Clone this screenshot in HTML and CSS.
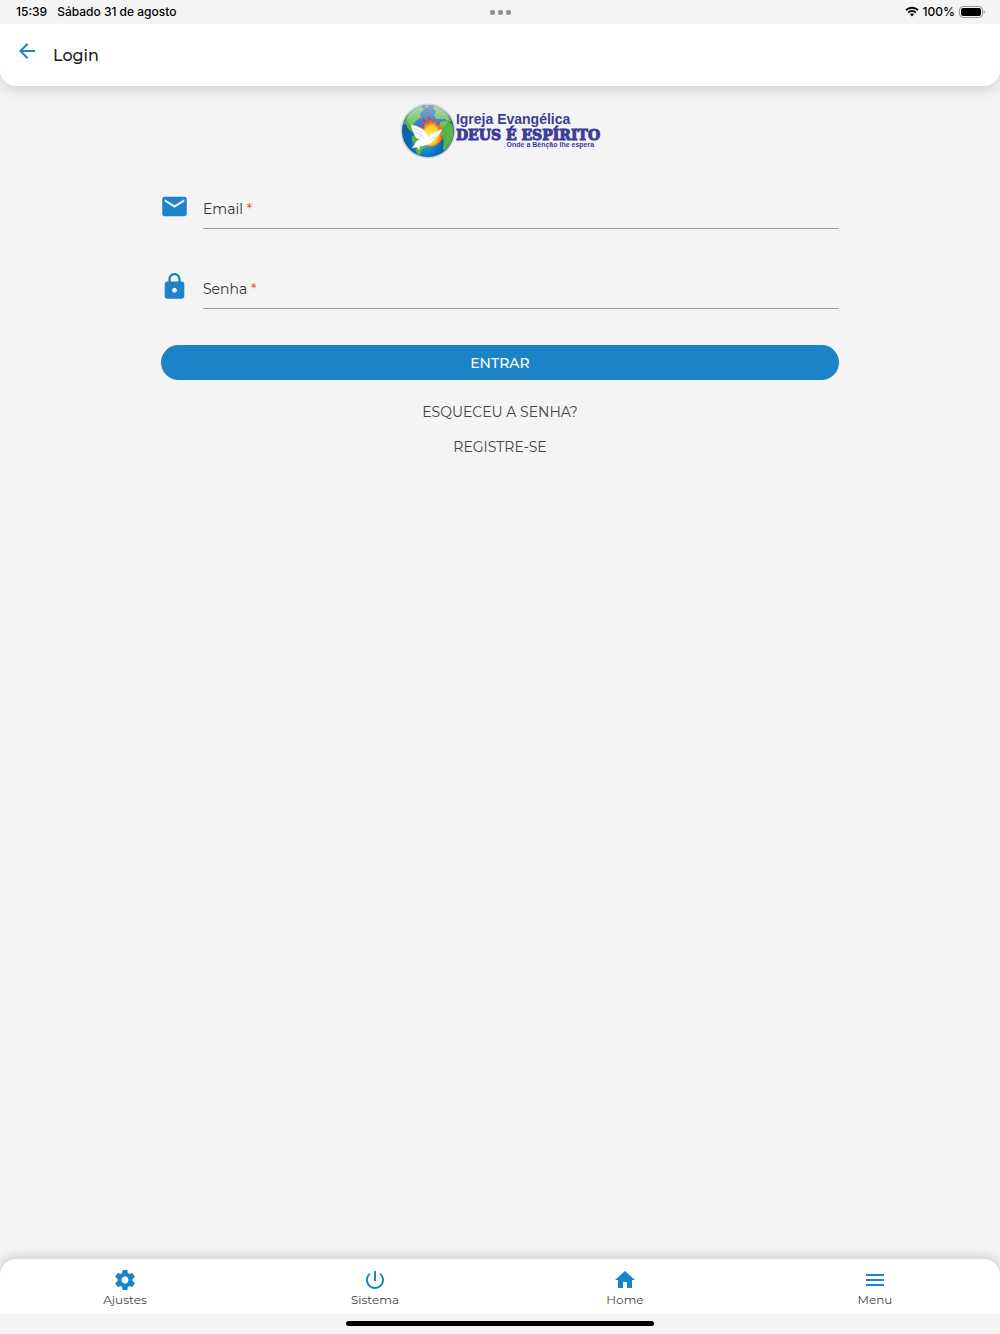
FILE: index.html
```html
<!DOCTYPE html>
<html lang="pt-BR">
<head>
    <meta charset="UTF-8">
    <meta name="viewport" content="width=device-width, initial-scale=1.0">
    <title>Login</title>
    <link rel="stylesheet" href="styles.css">
</head>
<body>
<div class="status-bar">
    <div class="status-left">
        <span>15:39</span>
        <span>Sábado 31 de agosto</span>
    </div>
    <div class="status-dots"><i></i><i></i><i></i></div>
    <div class="status-right">
        <svg class="wifi" viewBox="0 0 14 11">
            <path d="M1 4.2a8.6 8.6 0 0 1 12 0M3.2 6.5a5.5 5.5 0 0 1 7.6 0" fill="none" stroke="#000" stroke-width="1.8"/>
            <path d="M4.9 8.3a3 3 0 0 1 4.2 0L7 10.5z"/>
        </svg>
        <span>100%</span>
        <svg class="battery" viewBox="0 0 26 12">
            <rect x="0.5" y="0.5" width="23" height="11" rx="3.5" fill="none" stroke="#999"/>
            <rect x="2" y="2" width="20" height="8" rx="2"/>
            <path d="M24.7 4.2q1.2.5 1.2 1.8t-1.2 1.8z" fill="#999"/>
        </svg>
    </div>
</div>

<header class="header">
    <button type="button" class="back" aria-label="Voltar">
        <svg viewBox="0 0 24 24"><path d="M20 11H7.83l5.59-5.59L12 4l-8 8 8 8 1.41-1.41L7.83 13H20z"/></svg>
    </button>
    <h1>Login</h1>
</header>

<main class="content">
    <div class="logo">
        <svg class="globe" viewBox="0 0 56 56">
            <defs>
                <radialGradient id="sea" cx="45%" cy="75%" r="75%">
                    <stop offset="0" stop-color="#18a8e8"/>
                    <stop offset="0.4" stop-color="#0c68b8"/>
                    <stop offset="0.85" stop-color="#14539e"/>
                    <stop offset="1" stop-color="#0b3a80"/>
                </radialGradient>
                <linearGradient id="shine" x1="0" y1="0" x2="0" y2="1">
                    <stop offset="0" stop-color="#fff" stop-opacity="0.55"/>
                    <stop offset="1" stop-color="#fff" stop-opacity="0.05"/>
                </linearGradient>
                <radialGradient id="fire" cx="50%" cy="62%" r="55%">
                    <stop offset="0" stop-color="#fff34a"/>
                    <stop offset="0.5" stop-color="#ffd323"/>
                    <stop offset="0.75" stop-color="#fb7022"/>
                    <stop offset="1" stop-color="#e62b20"/>
                </radialGradient>
                <clipPath id="disc"><circle cx="28" cy="28" r="25.5"/></clipPath>
            </defs>
            <circle cx="28" cy="28" r="27.5" fill="#cfd3d7"/>
            <circle cx="28" cy="28" r="26" fill="url(#sea)"/>
            <g clip-path="url(#disc)" fill="#56b544">
                <path d="M4 18 8 11l7-6 7-1 2 3-4 3 1 4-5 4-3 4 0 4 3 4-3 0-5-4-2-5-3 1z"/>
                <path d="m12 33 5-1 6 4 4 4-1 4-4 3-2 5-3-1-2-8-3-5z"/>
                <path d="m33 4 6-2 6 4 5 6 3 6-4 1-4-3-5 0-4 0-2-4 2-3z"/>
                <path d="m40 19 6-1 5 2 5 6-1 11-4 4-3 7-4 2-1-6 1-6-3-6-3-5z"/>
                <path d="m24 2 5 0-2 3z"/>
            </g>
            <ellipse cx="28" cy="15" rx="21" ry="13" fill="url(#shine)"/>
            <path d="M21 38c-3-5 0-10-1-16 2 1 3 3 4 4 1-4-1-7-1-11 3 2 4 5 5 7 1-3 1-6 0-9 3 2 4 5 5 8 1-2 1-4 1-6 2 3 2 6 2 8 2-1 3-2 4-4 0 4 1 5 0 8l3-2c-2 4-1 6-2 9l2-1c-1 5-4 8-7 9-5 3-12 2-15-4z" fill="url(#fire)"/>
            <path d="M11 22c5 0 10 3 14 6 2 2 3 4 3 6 2-3 5-4 8-5l6-3c-1 4-4 7-7 9-2 4-5 7-9 7-2 1-4 1-6 1l-1 4-2-3-5 1 3-4c1-3 3-4 5-5-3 0-5-2-6-5l-1-3c-1-2-2-4-2-6z" fill="#fff" stroke="#cbdce8" stroke-width="0.4"/>
            <path d="m14 25 9 5m-7-1 7 4m-4 0 5 2m5 2 7-4" stroke="#b7ccd9" stroke-width="0.6" fill="none"/>
        </svg>
        <div class="logo-text">
            <span class="logo-top">Igreja Evangélica</span>
            <span class="logo-name">DEUS É ESPÍRITO</span>
            <span class="logo-slogan">Onde a Bênção lhe espera</span>
        </div>
    </div>

    <form class="login-form">
        <div class="field">
            <svg viewBox="1 1 22 22"><path d="M20 4H4c-1.1 0-1.99.9-1.99 2L2 18c0 1.1.9 2 2 2h16c1.1 0 2-.9 2-2V6c0-1.1-.9-2-2-2zm0 4-8 5-8-5V6l8 5 8-5z"/></svg>
            <div class="field-input">
                <label for="email">Email <span>*</span></label>
                <input type="email" id="email" required>
            </div>
        </div>
        <div class="field">
            <svg viewBox="1 1 22 22"><path d="M18 8h-1V6c0-2.76-2.24-5-5-5S7 3.24 7 6v2H6c-1.1 0-2 .9-2 2v10c0 1.1.9 2 2 2h12c1.1 0 2-.9 2-2V10c0-1.1-.9-2-2-2zm-6 9c-1.1 0-2-.9-2-2s.9-2 2-2 2 .9 2 2-.9 2-2 2zm3.1-9H8.9V6c0-1.71 1.39-3.1 3.1-3.1s3.1 1.39 3.1 3.1z"/></svg>
            <div class="field-input">
                <label for="senha">Senha <span>*</span></label>
                <input type="password" id="senha" required>
            </div>
        </div>
        <button type="button" class="submit">ENTRAR</button>
        <a href="#" class="form-link">ESQUECEU A SENHA?</a>
        <a href="#" class="form-link">REGISTRE-SE</a>
    </form>
</main>

<nav class="tabs">
    <a href="#">
        <svg viewBox="0 0 24 24"><path d="M19.43 12.98c.04-.32.07-.64.07-.98s-.03-.66-.07-.98l2.11-1.65c.19-.15.24-.42.12-.64l-2-3.46c-.12-.22-.39-.3-.61-.22l-2.49 1c-.52-.4-1.08-.73-1.69-.98l-.38-2.65C14.46 2.18 14.25 2 14 2h-4c-.25 0-.46.18-.49.42l-.38 2.65c-.61.25-1.17.59-1.69.98l-2.49-1c-.23-.09-.49 0-.61.22l-2 3.46c-.13.22-.07.49.12.64l2.11 1.65c-.04.32-.07.65-.07.98s.03.66.07.98l-2.11 1.65c-.19.15-.24.42-.12.64l2 3.46c.12.22.39.3.61.22l2.49-1c.52.4 1.08.73 1.69.98l.38 2.65c.03.24.24.42.49.42h4c.25 0 .46-.18.49-.42l.38-2.65c.61-.25 1.17-.59 1.69-.98l2.49 1c.23.09.49 0 .61-.22l2-3.46c.12-.22.07-.49-.12-.64zM12 15.5c-1.93 0-3.5-1.57-3.5-3.5s1.57-3.5 3.5-3.5 3.5 1.57 3.5 3.5-1.57 3.5-3.5 3.5z"/></svg>
        <span>Ajustes</span>
    </a>
    <a href="#">
        <svg viewBox="0 0 24 24"><path d="M13 3h-2v10h2zm4.83 2.17-1.42 1.42C17.99 7.86 19 9.81 19 12c0 3.87-3.13 7-7 7s-7-3.13-7-7c0-2.19 1.01-4.14 2.58-5.42L6.17 5.17C4.23 6.82 3 9.26 3 12c0 4.97 4.03 9 9 9s9-4.03 9-9c0-2.74-1.23-5.18-3.17-6.83z"/></svg>
        <span>Sistema</span>
    </a>
    <a href="#">
        <svg viewBox="0 0 24 24"><path d="M10 20v-6h4v6h5v-8h3L12 3 2 12h3v8z"/></svg>
        <span>Home</span>
    </a>
    <a href="#">
        <svg viewBox="0 0 24 24"><path d="M3 18h18v-2H3zm0-5h18v-2H3zm0-7v2h18V6z"/></svg>
        <span>Menu</span>
    </a>
</nav>
<div class="home-area"><div class="home-indicator"></div></div>
</body>
</html>
```
FILE: styles.css
```css
* {
    box-sizing: border-box;
}
body {
    display: flex;
    flex-direction: column;
    min-height: 100vh;
    margin: 0;
    background-color: #f4f4f4;
    color: #444;
    font-family: Montserrat, Inter, sans-serif;
    font-size: 14px;
}
a {
    color: inherit;
    text-decoration: none;
}
svg {
    display: block;
}
.status-bar {
    display: grid;
    grid-template-columns: 1fr auto 1fr;
    align-items: center;
    height: 24px;
    padding: 0 15px 0 16px;
    color: #000;
    font-family: Inter, sans-serif;
    font-size: 12px;
    font-weight: 500;
    line-height: 16px;
}
.status-left {
    display: flex;
    gap: 10px;
    padding-bottom: 1px;
}
.status-dots {
    display: flex;
    gap: 3px;
}
.status-dots i {
    width: 5px;
    height: 5px;
    border-radius: 50%;
    background-color: #909090;
}
.status-right {
    display: flex;
    align-items: center;
    justify-content: flex-end;
    gap: 4px;
    padding-bottom: 1px;
}
.wifi {
    width: 14px;
    height: 11px;
}
.battery {
    width: 26px;
    height: 12px;
}
.header {
    display: flex;
    align-items: center;
    gap: 14px;
    height: 62px;
    padding: 0 15px;
    background-color: #fff;
    border-radius: 0 0 16px 16px;
    box-shadow: 0 4px 14px rgba(0, 0, 0, 0.14);
    clip-path: inset(0 0 -24px);
}
.back {
    padding: 0 0 8px;
    border: none;
    background: none;
}
.back svg {
    width: 24px;
    height: 24px;
    fill: #1c83c8;
}
.header h1 {
    margin: 0;
    color: #222;
    font-size: 16px;
    font-weight: 500;
}
.content {
    flex: 1;
    padding-top: 17px;
}
.logo {
    display: flex;
    justify-content: center;
}
.globe {
    width: 56px;
    height: 56px;
}
.logo-text {
    display: flex;
    flex-direction: column;
    padding-top: 8px;
    color: #3b3c98;
    font-weight: bold;
    white-space: nowrap;
}
.logo-top {
    font-family: "Liberation Sans", Arial, sans-serif;
    font-size: 14px;
    line-height: 16px;
}
.logo-name {
    font-family: "DejaVu Serif", serif;
    font-size: 14px;
    line-height: 16px;
    -webkit-text-stroke: 1px #3b3c98;
}
.logo-slogan {
    align-self: flex-end;
    padding-right: 6px;
    font-family: "Liberation Sans", Arial, sans-serif;
    font-size: 7px;
    line-height: 4px;
}
.login-form {
    display: flex;
    flex-direction: column;
    width: calc(70% - 22px);
    margin: 30px auto 0;
}
.field {
    display: flex;
    gap: 15px;
    height: 40px;
    margin-bottom: 40px;
}
.field svg {
    width: 27px;
    height: 27px;
    margin-top: 4px;
    fill: #1c83c8;
}
.field-input {
    position: relative;
    flex: 1;
}
.field label {
    position: absolute;
    top: 10px;
    left: 0;
    color: #333;
    line-height: 20px;
}
.field label span {
    color: #f44336;
}
.field input {
    width: 100%;
    height: 40px;
    padding: 10px 0 0;
    border: none;
    border-bottom: 1px solid #999;
    outline: none;
    background: none;
    font: inherit;
}
.submit {
    height: 35px;
    margin: -4px 0 15px;
    border: none;
    border-radius: 18px;
    background-color: #1c83c8;
    color: #fff;
    font: inherit;
    font-weight: 500;
}
.form-link {
    align-self: center;
    line-height: 35px;
}
.tabs {
    display: grid;
    grid-template-columns: repeat(4, 1fr);
    height: 55px;
    padding-top: 9px;
    background-color: #fff;
    border-radius: 16px 16px 0 0;
    box-shadow: 0 -2px 12px rgba(0, 0, 0, 0.18);
    clip-path: inset(-20px 0 0);
    font-size: 12px;
}
.tabs a {
    display: flex;
    flex-direction: column;
    align-items: center;
    line-height: 16px;
}
.tabs svg {
    width: 24px;
    height: 24px;
    fill: #1c83c8;
}
.home-area {
    display: flex;
    justify-content: center;
    height: 20px;
    padding-top: 7px;
}
.home-indicator {
    width: 308px;
    height: 5px;
    border-radius: 3px;
    background-color: #000;
}
```
